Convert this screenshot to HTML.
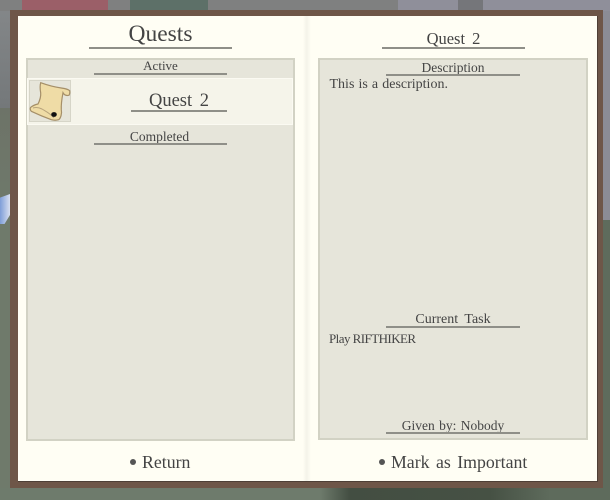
<!DOCTYPE html>
<html><head><meta charset="utf-8">
<style>
html,body{margin:0;padding:0}
#r{position:relative;width:610px;height:500px;overflow:hidden;background:#667264;font-family:"Liberation Serif",serif;color:#444444}
#r div{position:absolute}
.t{white-space:nowrap;text-align:center;line-height:1}
.l{background:#8f8f88;height:2px}
.box{background:#e6e5da;border:2px solid #d2d2c4;box-sizing:border-box}
</style></head><body>
<div id="r">
<div style="left:0;top:0;width:10px;height:108px;background:linear-gradient(#85888a,#74787a)"></div>
<div style="left:0;top:108px;width:10px;height:392px;background:linear-gradient(#6d7368,#6f7a6b 30%,#6f7a6b)"></div>
<div style="left:0;top:0;width:610px;height:11px;background:#7f8080"></div>
<div style="left:597px;top:0;width:13px;height:220px;background:#8b8c95"></div>
<div style="left:597px;top:220px;width:13px;height:280px;background:#5e6b5c"></div>
<div style="left:0;top:488px;width:610px;height:12px;background:linear-gradient(90deg,#6e7b6c 0,#6e7b6c 320px,#434e42 350px,#465144 490px,#5e6b5c 550px)"></div>
<div style="left:22px;top:0;width:86px;height:11px;background:#9b5f68"></div>
<div style="left:130px;top:0;width:78px;height:11px;background:#5d7068"></div>
<div style="left:398px;top:0;width:212px;height:11px;background:#8f8f9a"></div>
<div style="left:458px;top:0;width:25px;height:11px;background:#75767a"></div>
<div style="left:0;top:194px;width:10px;height:30px;background:linear-gradient(90deg,#7f9ed8,#d8dff0);clip-path:polygon(0 12%,100% 0,100% 70%,45% 100%,0 100%)"></div>
<div style="left:10px;top:10px;width:593px;height:478px;background:#6e5648"></div>
<div style="left:17.5px;top:15.5px;width:580px;height:466px;background:#4e3f36"></div>
<div style="left:18px;top:16px;width:579px;height:465px;background:#fffef4"></div>
<div style="left:303px;top:16px;width:8px;height:465px;background:linear-gradient(90deg,#fffef4,#f4f3e9 45%,#fffef4)"></div>

<div class="t" style="left:89px;top:23px;width:143px;font-size:23.5px">Quests</div>
<div class="l" style="left:89px;top:47px;width:143px"></div>

<div class="box" style="left:26px;top:58px;width:269px;height:383px"></div>
<div class="t" style="left:94px;top:59px;width:133px;font-size:13px">Active</div>
<div class="l" style="left:94px;top:73px;width:133px"></div>
<div style="left:27px;top:78px;width:266px;height:47px;background:#f5f4ea;border:1px solid #fbfaf2;box-sizing:border-box"></div>
<div style="left:29px;top:80px;width:42px;height:42px;background:#e6e5da;border:1px solid #d6d5c8;box-sizing:border-box"></div>
<svg style="position:absolute;left:29px;top:80px" width="42" height="42" viewBox="0 0 42 42">
<path d="M11.7 2.7 C18 5 25 7 32.3 8 C36 8.5 39 9 40.7 10.7 C41 13 40.5 15 39.7 15.3 C37.5 15.8 35.5 15.5 34 12.7 C33 18 32 24 32.3 29.7 C33 33 32 38 29.7 39.7 C27 40.5 24.5 40.3 22.3 39.7 C15 37 8 34 2.3 31.3 C1 30 1 28 1.7 27.3 C4 25.5 6.5 24.5 9 24 C11 20 12 17 11.7 13 C11 9 11 5 11.7 2.7 Z" fill="#efdca6" stroke="#a58f68" stroke-width="1.2"/>
<path d="M4 28 C7 27 10 27.5 13 29 C18 32 22 34 25 38" fill="none" stroke="#b8a47c" stroke-width="1"/>
<ellipse cx="25" cy="34.5" rx="2.8" ry="2.4" fill="#111"/>
</svg>
<div class="t" style="left:131px;top:91.5px;width:96px;font-size:18.5px;word-spacing:3px">Quest 2</div>
<div class="l" style="left:131px;top:110px;width:96px"></div>
<div class="t" style="left:93px;top:130px;width:133px;font-size:13.5px">Completed</div>
<div class="l" style="left:94px;top:143px;width:133px"></div>

<div class="t" style="left:382px;top:31px;width:143px;font-size:16.5px;word-spacing:3px">Quest 2</div>
<div class="l" style="left:382px;top:47px;width:143px"></div>
<div class="box" style="left:318px;top:58px;width:270px;height:382px"></div>
<div class="t" style="left:386px;top:61px;width:134px;font-size:13.5px">Description</div>
<div class="l" style="left:386px;top:74px;width:134px"></div>
<div class="t" style="left:329.5px;top:78px;font-size:14px;word-spacing:.6px">This is a description.</div>
<div class="t" style="left:386px;top:313px;width:134px;font-size:14px;word-spacing:3px">Current Task</div>
<div class="l" style="left:386px;top:326px;width:134px"></div>
<div class="t" style="left:329px;top:332px;font-size:13px;letter-spacing:-.55px">Play RIFTHIKER</div>
<div class="t" style="left:386px;top:419px;width:134px;font-size:13.5px;word-spacing:1px">Given by: Nobody</div>
<div class="l" style="left:386px;top:432px;width:134px"></div>

<div style="left:129.5px;top:459px;width:6px;height:6px;border-radius:50%;background:#555"></div>
<div class="t" style="left:142px;top:454px;font-size:17.8px">Return</div>
<div style="left:378.5px;top:459px;width:6px;height:6px;border-radius:50%;background:#555"></div>
<div class="t" style="left:391px;top:454px;font-size:17.8px;word-spacing:2px">Mark as Important</div>
</div>
</body></html>
